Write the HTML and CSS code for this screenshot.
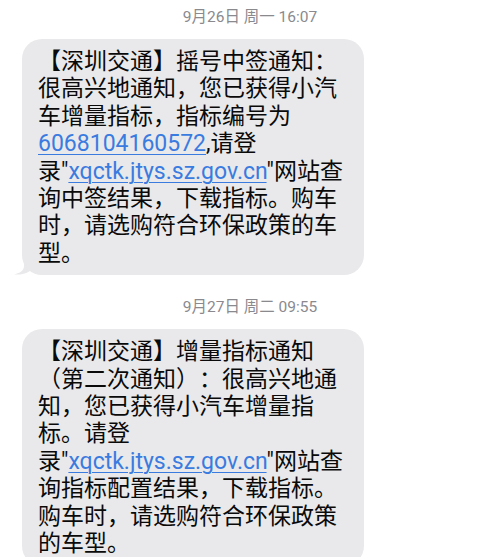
FILE: index.html
```html
<!DOCTYPE html>
<html lang="zh-CN">
<head>
<meta charset="utf-8">
<link rel="stylesheet" href="styles.css">
</head>
<body>
<div class="thread">
  <div class="stamp">9月26日 周一 16:07</div>
  <div class="bubble tail">
    <p class="msg">【深圳交通】摇号中签通知：<br>很高兴地通知，您已获得小汽<br>车增量指标，指标编号为<br><a class="link">6068104160572</a>,请登<br>录"<a class="link">xqctk.jtys.sz.gov.cn</a>"网站查<br>询中签结果，下载指标。购车<br>时，请选购符合环保政策的车<br>型。</p>
    <svg class="tail-svg" width="16" height="18" viewBox="0 0 16 18"><path d="M10 0 L10 9 C10 13 7 16 0 17.5 C6 18 11 17 16 14 L16 0 Z" fill="#e9e9eb"/></svg>
  </div>
  <div class="stamp stamp2">9月27日 周二 09:55</div>
  <div class="bubble">
    <p class="msg">【深圳交通】增量指标通知<br>（第二次通知）：很高兴地通<br>知，您已获得小汽车增量指<br>标。请登<br>录"<a class="link">xqctk.jtys.sz.gov.cn</a>"网站查<br>询指标配置结果，下载指标。<br>购车时，请选购符合环保政策<br>的车型。</p>
  </div>
</div>
</body>
</html>
```
FILE: styles.css
```css
html, body {
  margin: 0;
  padding: 0;
  background: #ffffff;
}
.thread {
  width: 500px;
  padding: 8px 0 0 22px;
  box-sizing: border-box;
  font-family: Roboto, "Noto Sans CJK SC", sans-serif;
}
.stamp {
  width: 456px;
  text-align: center;
  font-size: 15.5px;
  line-height: 18px;
  color: #8a8a8e;
  margin-bottom: 13px;
  text-spacing-trim: space-all;
}
.stamp2 {
  margin-top: 23px;
}
.bubble {
  position: relative;
  width: 342px;
  box-sizing: border-box;
  background: #e9e9eb;
  border-radius: 20px;
  padding: 9px 0 8px 16px;
}
.msg {
  margin: 0;
  font-size: 23px;
  font-weight: 400;
  line-height: 27.4px;
  color: #0a0a0a;
  white-space: nowrap;
  text-spacing-trim: space-all;
}
.link {
  color: #3a7be0;
  text-decoration: underline;
  text-decoration-thickness: 1px;
  text-underline-offset: 3px;
}
.tail-svg {
  position: absolute;
  left: -8px;
  bottom: 0;
}
```
